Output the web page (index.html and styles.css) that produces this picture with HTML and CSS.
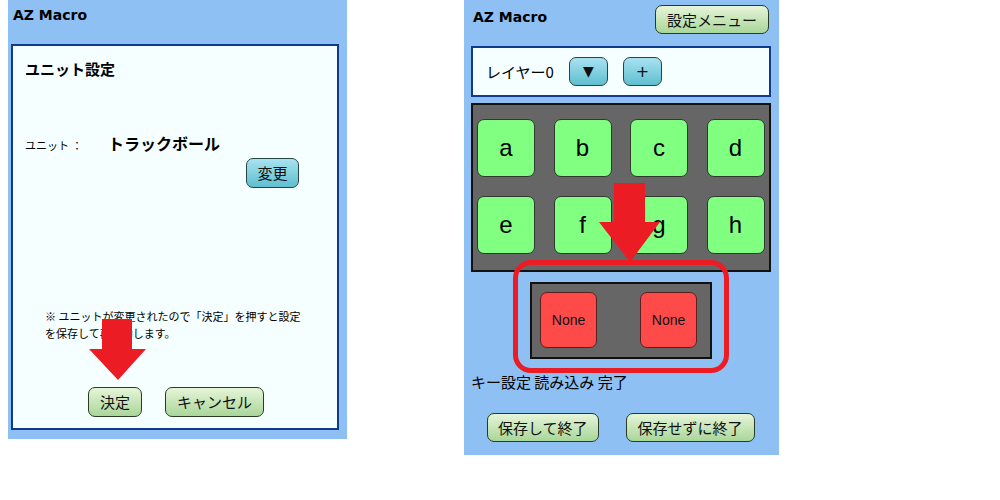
FILE: index.html
```html
<!DOCTYPE html>
<html lang="ja">
<head>
<meta charset="utf-8">
<title>AZ Macro</title>
<link rel="stylesheet" href="styles.css">
</head>
<body>
<div class="page">
  <section class="panel panel-left">
    <div class="app-title">AZ Macro</div>
    <div class="unit-box">
      <h2 class="unit-heading">ユニット設定</h2>
      <div class="unit-row">
        <span class="unit-label">ユニット ：</span>
        <span class="unit-value">トラックボール</span>
      </div>
      <button class="btn btn-blue btn-change">変更</button>
      <p class="note">※ ユニットが変更されたので「決定」を押すと設定を保存して再起動します。</p>
      <div class="btn-row btn-row-left">
        <button class="btn btn-green">決定</button>
        <button class="btn btn-green">キャンセル</button>
      </div>
    </div>
    <svg class="arrow arrow-left" width="57" height="61" viewBox="0 0 57 61"><polygon points="13,0 43,0 43,30 57,30 29,61 0,30 13,30" fill="#ec1c24"/></svg>
  </section>

  <section class="panel panel-right">
    <div class="header">
      <div class="app-title app-title-right">AZ Macro</div>
      <button class="btn btn-green btn-menu">設定メニュー</button>
    </div>
    <div class="layer-box">
      <span class="layer-name">レイヤー0</span>
      <button class="btn btn-blue btn-small"><span class="tri">▼</span></button>
      <button class="btn btn-blue btn-small btn-plus">+</button>
    </div>
    <div class="keyboard">
      <div class="key">a</div>
      <div class="key">b</div>
      <div class="key">c</div>
      <div class="key">d</div>
      <div class="key">e</div>
      <div class="key">f</div>
      <div class="key">g</div>
      <div class="key">h</div>
    </div>
    <div class="extra-keys">
      <div class="key-none">None</div>
      <div class="key-none">None</div>
    </div>
    <div class="status">キー設定 読み込み 完了</div>
    <div class="btn-row btn-row-right">
      <button class="btn btn-green">保存して終了</button>
      <button class="btn btn-green">保存せずに終了</button>
    </div>
    <div class="highlight"></div>
    <svg class="arrow arrow-right" width="61" height="79" viewBox="0 0 61 79"><polygon points="15,0 46,0 46,39 61,39 31,79 0,39 15,39" fill="#ec1c24"/></svg>
  </section>
</div>
</body>
</html>
```

FILE: styles.css
```css
* { box-sizing: border-box; }

body {
  margin: 0;
  background: #ffffff;
  font-family: "Noto Sans CJK JP", "Noto Sans", sans-serif;
  color: #000;
}

.page {
  display: flex;
  align-items: flex-start;
}

.panel {
  position: relative;
  background: #8ec0f4;
  display: flex;
  flex-direction: column;
}

.panel-left {
  margin-left: 8px;
  width: 339px;
  height: 439px;
}

.panel-right {
  margin-left: 117px;
  width: 315px;
  height: 455px;
}

.app-title {
  font-family: "DejaVu Sans", sans-serif;
  font-weight: bold;
  font-size: 14px;
  line-height: 16px;
  height: 44px;
  padding: 7px 0 0 5px;
}

.app-title-right {
  height: auto;
  padding: 9px 0 0 9px;
}

/* buttons */
.btn {
  font-family: "Noto Sans CJK JP", sans-serif;
  font-size: 15px;
  line-height: 28px;
  height: 30px;
  padding: 0 11px;
  border: 1px solid #2b3a25;
  border-radius: 7px;
  color: #111;
  cursor: pointer;
}

.btn-green {
  background: linear-gradient(#e6f5d8, #a9d69a);
}

.btn-blue {
  background: linear-gradient(#a8e2f2, #5fbfcf);
  border-color: #274543;
}

/* left */
.unit-box {
  margin-left: 3px;
  width: 328px;
  height: 386px;
  border: 2px solid #103a90;
  background: #f5ffff;
  display: flex;
  flex-direction: column;
  padding: 13px 0 0 12px;
}

.unit-heading {
  margin: 0;
  font-size: 15px;
  font-weight: bold;
  line-height: 20px;
}

.unit-row {
  margin-top: 54px;
  display: flex;
  align-items: baseline;
  line-height: 20px;
}

.unit-label {
  width: 83px;
  font-size: 11px;
}

.unit-value {
  font-size: 16px;
  font-weight: bold;
}

.btn-change {
  align-self: flex-end;
  margin: 3px 38px 0 0;
  width: 53px;
  padding: 0;
}

.note {
  margin: 120px 0 0 20px;
  width: 262px;
  font-size: 11px;
  line-height: 17px;
}

.btn-row {
  display: flex;
}

.btn-row-left {
  margin-top: 45px;
  padding-left: 63px;
  gap: 23px;
}

.arrow {
  position: absolute;
  display: block;
}

.arrow-left {
  left: 81px;
  top: 319px;
}

/* right */
.header {
  display: flex;
  justify-content: space-between;
  align-items: flex-start;
  height: 46px;
}

.btn-menu {
  margin: 5px 10px 0 0;
  height: 29px;
  line-height: 27px;
}

.layer-box {
  margin-left: 7px;
  width: 300px;
  height: 51px;
  border: 2px solid #103a90;
  background: #f5ffff;
  display: flex;
  align-items: center;
  padding-left: 13px;
  gap: 15px;
}

.layer-name {
  font-size: 15px;
  line-height: 20px;
}

.btn-small {
  width: 39px;
  height: 29px;
  padding: 0;
  font-family: "DejaVu Sans", sans-serif;
  font-size: 14px;
  line-height: 27px;
}

.tri {
  font-size: 14px;
}

.btn-plus {
  font-size: 16px;
}

.keyboard {
  margin: 6px 0 0 7px;
  width: 300px;
  height: 169px;
  border: 2px solid #111;
  background: #666666;
  display: grid;
  grid-template-columns: repeat(4, 58px);
  grid-auto-rows: 58px;
  column-gap: 18.5px;
  row-gap: 19px;
  padding: 14px 0 0 4px;
  align-content: start;
}

.key {
  background: #80ff80;
  border: 1px solid #2e3a2e;
  border-radius: 7px;
  display: flex;
  align-items: center;
  justify-content: center;
  font-family: "Liberation Sans", Arial, sans-serif;
  font-size: 24px;
  color: #000;
}

.extra-keys {
  margin: 10px 0 0 66px;
  width: 182px;
  height: 77px;
  border: 2px solid #111;
  background: #666666;
  display: flex;
  align-items: flex-start;
  gap: 43px;
  padding: 8px 0 0 8px;
}

.key-none {
  width: 57px;
  height: 56px;
  background: #ff4a4a;
  border: 1px solid #5a2020;
  border-radius: 7px;
  display: flex;
  align-items: center;
  justify-content: center;
  font-family: "Liberation Sans", Arial, sans-serif;
  font-size: 14px;
  color: #111;
}

.status {
  margin-top: 13px;
  padding-left: 7px;
  font-size: 15px;
  line-height: 20px;
}

.btn-row-right {
  margin-top: 21px;
  padding-left: 23px;
  gap: 27px;
}

.btn-row-right .btn {
  height: 29px;
  line-height: 27px;
  padding: 0 10px;
}

.btn-row-right .btn + .btn {
  padding: 0 11px;
}

.highlight {
  position: absolute;
  left: 49px;
  top: 260px;
  width: 216px;
  height: 113px;
  border: 5px solid #ec1c24;
  border-radius: 18px;
}

.arrow-right {
  left: 135px;
  top: 183px;
}
```
